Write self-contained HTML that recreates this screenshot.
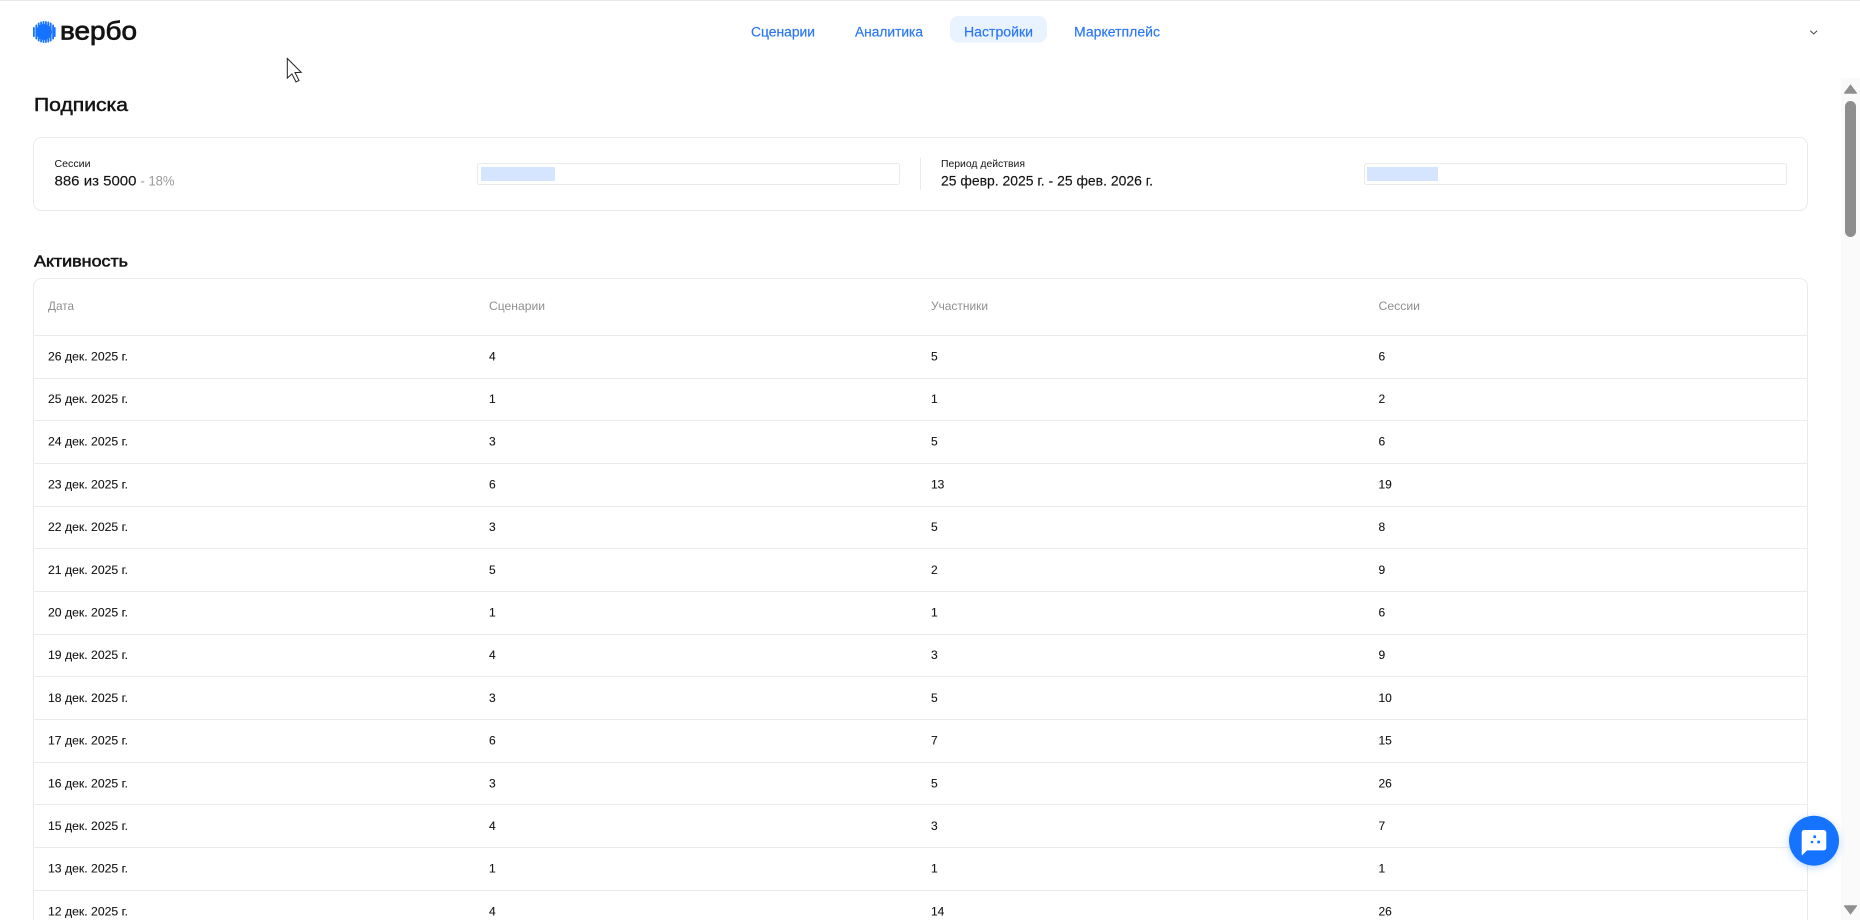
<!DOCTYPE html>
<html lang="ru">
<head>
<meta charset="utf-8">
<title>Подписка</title>
<style>
html,body{margin:0;padding:0;width:1860px;height:920px;overflow:hidden;background:#fff}
svg{display:block}
text{font-family:"Liberation Sans","Noto Sans CJK SC",sans-serif;fill:#141414}
.nav{font-size:13.5px;fill:#2a76f6;stroke:#2a76f6;stroke-width:.18px}
.h{font-size:12px;fill:#8f8f8f}
.c{font-size:12px;stroke:#141414;stroke-width:.1px}
.b{stroke:#eaeaea;stroke-width:1;fill:#fff}
.l{stroke:#ebebeb;stroke-width:1}
</style>
</head>
<body>
<svg width="1860" height="920" viewBox="0 0 1860 920" xmlns="http://www.w3.org/2000/svg">
<rect width="1860" height="920" fill="#fff"/>
<rect width="1860" height="1" fill="#e6e6e6"/>

<!-- logo -->
<g fill="#1573ff">
<circle cx="44" cy="32" r="8"/>
<rect x="33" y="27" width="1.8" height="10" rx=".9"/>
<rect x="35.4" y="24.5" width="1.8" height="15" rx=".9"/>
<rect x="37.8" y="22.5" width="1.8" height="19" rx=".9"/>
<rect x="40.2" y="21.5" width="1.8" height="21" rx=".9"/>
<rect x="42.6" y="21" width="1.8" height="22" rx=".9"/>
<rect x="45" y="21" width="1.8" height="22" rx=".9"/>
<rect x="47.4" y="21.5" width="1.8" height="21" rx=".9"/>
<rect x="49.8" y="22.5" width="1.8" height="19" rx=".9"/>
<rect x="52.2" y="24.5" width="1.8" height="15" rx=".9"/>
<rect x="54" y="27" width="1.6" height="10" rx=".8"/>
</g>
<text x="60" y="39.5" font-size="26" textLength="77" lengthAdjust="spacingAndGlyphs" style="stroke:#141414;stroke-width:.75px">вербо</text>

<!-- nav -->
<rect x="950" y="16" width="97" height="26.5" rx="8" fill="#e9f3ff"/>
<text class="nav" x="751" y="36.5" textLength="64" lengthAdjust="spacingAndGlyphs">Сценарии</text>
<text class="nav" x="855" y="36.5" textLength="68" lengthAdjust="spacingAndGlyphs">Аналитика</text>
<text class="nav" x="964" y="36.5" textLength="69" lengthAdjust="spacingAndGlyphs">Настройки</text>
<text class="nav" x="1074" y="36.5" textLength="86" lengthAdjust="spacingAndGlyphs">Маркетплейс</text>
<path d="M1810.3 30.8l3.4 3.2 3.4-3.2" fill="none" stroke="#444" stroke-width="1"/>

<!-- cursor -->
<path d="M287.3 58.5v19.6l4.6-4.2 4.1 8 3-1.5-4-7.8 6.2-.3z" fill="#fff" stroke="#222" stroke-width="1" stroke-linejoin="miter"/>

<!-- subscription -->
<text x="34" y="111" font-size="18.5" textLength="94" lengthAdjust="spacingAndGlyphs" style="stroke:#141414;stroke-width:.5px">Подписка</text>
<rect class="b" x="33.5" y="137.5" width="1774" height="73" rx="8"/>
<text x="54.5" y="167" font-size="10.5" textLength="36" lengthAdjust="spacingAndGlyphs" fill="#222">Сессии</text>
<text x="54.5" y="185.6" font-size="14" textLength="82" lengthAdjust="spacingAndGlyphs" style="stroke:#141414;stroke-width:.15px">886 из 5000</text>
<text x="140.5" y="185.6" font-size="14" textLength="34" lengthAdjust="spacingAndGlyphs" style="fill:#9a9a9a">- 18%</text>
<rect class="b" x="477.5" y="163.5" width="422" height="21" rx="2"/>
<rect x="481" y="167" width="74" height="14" fill="#d5e5fd"/>
<line class="l" x1="920.5" y1="158" x2="920.5" y2="190"/>
<text x="941" y="167" font-size="10.5" textLength="84" lengthAdjust="spacingAndGlyphs">Период действия</text>
<text x="941" y="185.6" font-size="14" textLength="212" lengthAdjust="spacingAndGlyphs" style="stroke:#141414;stroke-width:.15px">25 февр. 2025 г. - 25 фев. 2026 г.</text>
<rect class="b" x="1364.5" y="163.5" width="422" height="21" rx="2"/>
<rect x="1367" y="167" width="71" height="14" fill="#d5e5fd"/>

<!-- activity -->
<text x="34" y="266.5" font-size="16" textLength="94" lengthAdjust="spacingAndGlyphs" style="stroke:#141414;stroke-width:.55px">Активность</text>
<path class="b" d="M33.5 920V286.5a8 8 0 0 1 8-8h1758a8 8 0 0 1 8 8V920"/>
<text class="h" x="48" y="310" textLength="26" lengthAdjust="spacingAndGlyphs">Дата</text>
<text class="h" x="489" y="310" textLength="56" lengthAdjust="spacingAndGlyphs">Сценарии</text>
<text class="h" x="931" y="310" textLength="57" lengthAdjust="spacingAndGlyphs">Участники</text>
<text class="h" x="1378.5" y="310" textLength="41.5" lengthAdjust="spacingAndGlyphs">Сессии</text>

<g class="l">
<line x1="34" x2="1807" y1="335.5" y2="335.5"/>
<line x1="34" x2="1807" y1="378.5" y2="378.5"/>
<line x1="34" x2="1807" y1="420.5" y2="420.5"/>
<line x1="34" x2="1807" y1="463.5" y2="463.5"/>
<line x1="34" x2="1807" y1="506.5" y2="506.5"/>
<line x1="34" x2="1807" y1="548.5" y2="548.5"/>
<line x1="34" x2="1807" y1="591.5" y2="591.5"/>
<line x1="34" x2="1807" y1="634.5" y2="634.5"/>
<line x1="34" x2="1807" y1="676.5" y2="676.5"/>
<line x1="34" x2="1807" y1="719.5" y2="719.5"/>
<line x1="34" x2="1807" y1="762.5" y2="762.5"/>
<line x1="34" x2="1807" y1="804.5" y2="804.5"/>
<line x1="34" x2="1807" y1="847.5" y2="847.5"/>
<line x1="34" x2="1807" y1="890.5" y2="890.5"/>
</g>

<g>
<text class="c" x="48" y="360.3" textLength="80" lengthAdjust="spacingAndGlyphs">26 дек. 2025 г.</text><text class="c" x="489" y="360.3">4</text><text class="c" x="931" y="360.3">5</text><text class="c" x="1378.5" y="360.3">6</text>
<text class="c" x="48" y="403" textLength="80" lengthAdjust="spacingAndGlyphs">25 дек. 2025 г.</text><text class="c" x="489" y="403">1</text><text class="c" x="931" y="403">1</text><text class="c" x="1378.5" y="403">2</text>
<text class="c" x="48" y="445.7" textLength="80" lengthAdjust="spacingAndGlyphs">24 дек. 2025 г.</text><text class="c" x="489" y="445.7">3</text><text class="c" x="931" y="445.7">5</text><text class="c" x="1378.5" y="445.7">6</text>
<text class="c" x="48" y="488.4" textLength="80" lengthAdjust="spacingAndGlyphs">23 дек. 2025 г.</text><text class="c" x="489" y="488.4">6</text><text class="c" x="931" y="488.4">13</text><text class="c" x="1378.5" y="488.4">19</text>
<text class="c" x="48" y="531.1" textLength="80" lengthAdjust="spacingAndGlyphs">22 дек. 2025 г.</text><text class="c" x="489" y="531.1">3</text><text class="c" x="931" y="531.1">5</text><text class="c" x="1378.5" y="531.1">8</text>
<text class="c" x="48" y="573.8" textLength="80" lengthAdjust="spacingAndGlyphs">21 дек. 2025 г.</text><text class="c" x="489" y="573.8">5</text><text class="c" x="931" y="573.8">2</text><text class="c" x="1378.5" y="573.8">9</text>
<text class="c" x="48" y="616.5" textLength="80" lengthAdjust="spacingAndGlyphs">20 дек. 2025 г.</text><text class="c" x="489" y="616.5">1</text><text class="c" x="931" y="616.5">1</text><text class="c" x="1378.5" y="616.5">6</text>
<text class="c" x="48" y="659.2" textLength="80" lengthAdjust="spacingAndGlyphs">19 дек. 2025 г.</text><text class="c" x="489" y="659.2">4</text><text class="c" x="931" y="659.2">3</text><text class="c" x="1378.5" y="659.2">9</text>
<text class="c" x="48" y="701.9" textLength="80" lengthAdjust="spacingAndGlyphs">18 дек. 2025 г.</text><text class="c" x="489" y="701.9">3</text><text class="c" x="931" y="701.9">5</text><text class="c" x="1378.5" y="701.9">10</text>
<text class="c" x="48" y="744.6" textLength="80" lengthAdjust="spacingAndGlyphs">17 дек. 2025 г.</text><text class="c" x="489" y="744.6">6</text><text class="c" x="931" y="744.6">7</text><text class="c" x="1378.5" y="744.6">15</text>
<text class="c" x="48" y="787.3" textLength="80" lengthAdjust="spacingAndGlyphs">16 дек. 2025 г.</text><text class="c" x="489" y="787.3">3</text><text class="c" x="931" y="787.3">5</text><text class="c" x="1378.5" y="787.3">26</text>
<text class="c" x="48" y="830" textLength="80" lengthAdjust="spacingAndGlyphs">15 дек. 2025 г.</text><text class="c" x="489" y="830">4</text><text class="c" x="931" y="830">3</text><text class="c" x="1378.5" y="830">7</text>
<text class="c" x="48" y="872.7" textLength="80" lengthAdjust="spacingAndGlyphs">13 дек. 2025 г.</text><text class="c" x="489" y="872.7">1</text><text class="c" x="931" y="872.7">1</text><text class="c" x="1378.5" y="872.7">1</text>
<text class="c" x="48" y="915.4" textLength="80" lengthAdjust="spacingAndGlyphs">12 дек. 2025 г.</text><text class="c" x="489" y="915.4">4</text><text class="c" x="931" y="915.4">14</text><text class="c" x="1378.5" y="915.4">26</text>
</g>

<!-- scrollbar -->
<rect x="1841" y="78" width="19" height="842" fill="#fafafa"/>
<path d="M1850.5 84.3l6.5 8.6a.6.6 0 0 1-.5.8h-12a.6.6 0 0 1-.5-.8z" fill="#8f8f8f"/>
<rect x="1845" y="101" width="11" height="136" rx="5.5" fill="#8e8e8e"/>
<path d="M1850.5 914.7l6.5-8.6a.6.6 0 0 0-.5-.8h-12a.6.6 0 0 0-.5.8z" fill="#8f8f8f"/>

<!-- chat -->
<circle cx="1814" cy="840.7" r="25" fill="#1573ff" style="filter:drop-shadow(0 2px 4px rgba(21,115,255,.28))"/>
<path d="M1804 830h19.6a2.7 2.7 0 0 1 2.7 2.7v15a2.7 2.7 0 0 1-2.7 2.7h-16.6l-4.6 4.6a.4.4 0 0 1-.7-.3v-22a2.7 2.7 0 0 1 2.3-2.7z" fill="#fff"/>
<circle cx="1814.7" cy="836.7" r="1.5" fill="#1573ff"/>
<circle cx="1812" cy="842" r="1.3" fill="#1573ff"/>
<circle cx="1818.7" cy="842" r="1.5" fill="#1573ff"/>
</svg>
</body>
</html>
